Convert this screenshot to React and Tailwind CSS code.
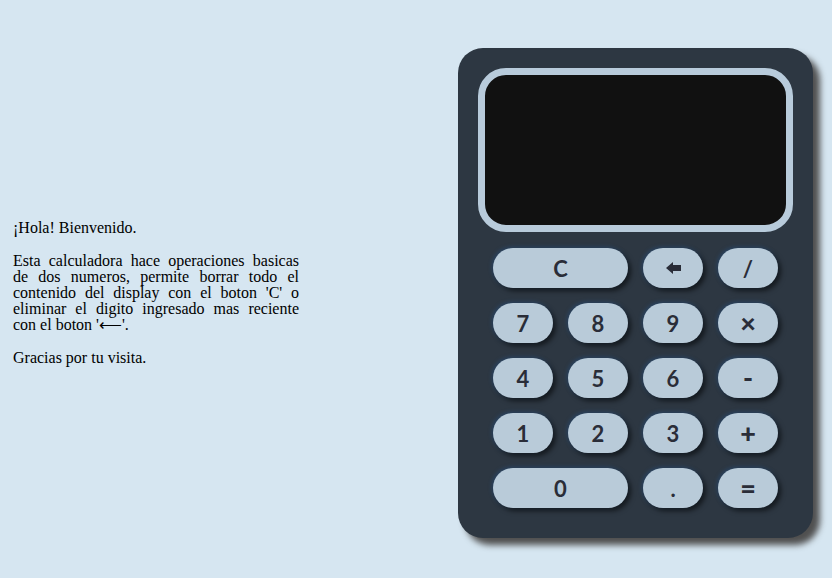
import React from "react";

const btn =
  "h-[40px] rounded-[20px] bg-[#b9cbd9] text-[#2a2d38] flex items-center justify-center text-[22px] font-bold shadow-[3px_3px_5px_rgba(0,0,0,0.55),-1px_-1px_4px_rgba(40,90,150,0.45)]";

function Back() {
  return (
    <svg width="15" height="12" viewBox="0 0 15 12">
      <path d="M0 6 L7 0 L7 3 L15 3 L15 9 L7 9 L7 12 Z" fill="#2a2d38" />
    </svg>
  );
}

export default function App() {
  const rows = [
    ["7", "8", "9", "×"],
    ["4", "5", "6", "-"],
    ["1", "2", "3", "+"],
  ];
  const ops = ["×", "+", "-"];
  return (
    <div className="w-[832px] h-[578px] bg-[#d6e6f1] flex items-start overflow-hidden">
      <div
        className="w-[286px] ml-[13px] mt-[220px] text-[16px] leading-[16px] text-black text-justify"
        style={{ fontFamily: '"Liberation Serif", serif' }}
      >
        <p>¡Hola! Bienvenido.</p>
        <p className="mt-[17px]">
          Esta calculadora hace operaciones basicas de dos numeros, permite borrar todo el contenido del display con el boton 'C' o eliminar el digito ingresado mas reciente con el boton '⟵'.
        </p>
        <p className="mt-[17px]">Gracias por tu visita.</p>
      </div>
      <div
        className="ml-auto mr-[19px] mt-[48px] w-[355px] h-[490px] rounded-[25px] bg-[#2d3742] shadow-[7px_7px_6px_#505050] px-[20px] pt-[20px]"
        style={{ fontFamily: '"Lato", "Noto Sans", sans-serif' }}
      >
        <div className="h-[164px] rounded-[28px] border-[7px] border-[#b8cbdb] bg-[#111111]" />
        <div className="mt-[16px] px-[15px] grid grid-cols-[60px_60px_60px_60px] gap-[15px]">
          <div className={btn + " col-span-2"}>C</div>
          <div className={btn}>
            <Back />
          </div>
          <div className={btn}>/</div>
          {rows.flat().map((k, i) => (
            <div key={i} className={btn}>
              {ops.includes(k) ? <span className="text-[27px] font-black">{k}</span> : k}
            </div>
          ))}
          <div className={btn + " col-span-2"}>0</div>
          <div className={btn}>.</div>
          <div className={btn}>
            <span className="text-[27px] font-black">=</span>
          </div>
        </div>
      </div>
    </div>
  );
}
